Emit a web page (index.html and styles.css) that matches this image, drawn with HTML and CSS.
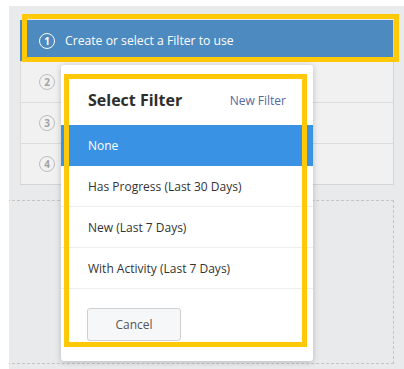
FILE: index.html
```html
<html>
    <head>
        <title>Select Filter</title>
        <meta charset="utf-8">
        <meta name="viewport" content="width=device-width, initial-scale=1">
        <link rel="stylesheet" href="styles.css">
    </head>
    <body>
        <div class="panel">
            <div class="steps">
                <div class="step active">
                    <span class="step-num">1</span>
                    <span class="step-text">Create or select a Filter to use</span>
                </div>
                <div class="step"><span class="step-num">2</span></div>
                <div class="step"><span class="step-num">3</span></div>
                <div class="step"><span class="step-num">4</span></div>
            </div>
            <div class="drop-area"></div>
        </div>

        <div class="highlight step-highlight"></div>

        <div class="popup">
            <div class="popup-header">
                <h4>Select Filter</h4>
                <a class="new-filter">New Filter</a>
            </div>
            <ul class="filter-list">
                <li class="selected">None</li>
                <li>Has Progress (Last 30 Days)</li>
                <li>New (Last 7 Days)</li>
                <li>With Activity (Last 7 Days)</li>
            </ul>
            <div class="popup-footer">
                <input type="button" class="cancel-button" value="Cancel">
            </div>
            <div class="highlight popup-highlight"></div>
        </div>
    </body>
</html>
```
FILE: styles.css
```css
body {
    margin: 0;
    background: #fff;
    font-family: 'Open Sans', 'Liberation Sans', sans-serif;
    color: #333;
    width: 404px;
    height: 369px;
    overflow: hidden;
    position: relative;
}

.panel {
    margin: 6px 0 0 9px;
    height: 363px;
    background: #e9eaec;
    padding: 14px 10px 0 11px;
    box-sizing: border-box;
    overflow: hidden;
}

.steps {
    background: #f1f1f1;
    border-left: 1px solid #dcdcdc;
    border-right: 1px solid #d4d4d4;
    border-bottom: 1px solid #d4d4d4;
}

.step {
    height: 41px;
    display: flex;
    align-items: center;
    padding-left: 18px;
    border-top: 1px solid #dcdcdc;
    box-sizing: border-box;
}

.step:first-child {
    border-top: none;
}

.step.active {
    background: #4d8abf;
    color: #fff;
    margin-left: -1px;
    padding-left: 19px;
}

.step-num {
    width: 14px;
    height: 14px;
    border: 1.2px solid #bdbdbd;
    border-radius: 50%;
    color: #a3a3a3;
    font-size: 10px;
    font-weight: bold;
    display: flex;
    align-items: center;
    justify-content: center;
}

.step.active .step-num {
    border-color: #fff;
    color: #fff;
}

.step-text {
    margin-left: 10px;
    font-size: 12.2px;
}

.drop-area {
    margin: 15px 0 0 -13px;
    height: 164px;
    border: 1.5px dashed #c4c4c4;
    box-sizing: border-box;
}

.highlight {
    position: absolute;
    border: 5px solid #ffc907;
    box-sizing: border-box;
    pointer-events: none;
}

.step-highlight {
    left: 22px;
    top: 14px;
    width: 377px;
    height: 48px;
}

.popup {
    position: absolute;
    left: 61px;
    top: 65px;
    width: 252px;
    height: 296px;
    background: #fff;
    border-radius: 3px;
    box-shadow: 0 1px 6px rgba(0, 0, 0, 0.22);
    display: flex;
    flex-direction: column;
}

.popup-header {
    height: 60px;
    display: flex;
    align-items: flex-end;
    justify-content: space-between;
    padding: 0 27px 14px 27px;
    box-sizing: border-box;
}

.popup-header h4 {
    margin: 0;
    font-size: 16px;
    font-weight: bold;
    color: #2d2d2d;
    line-height: 22px;
}

.new-filter {
    font-size: 12px;
    color: #55679f;
    line-height: 20px;
}

.filter-list {
    list-style: none;
    margin: 0;
    padding: 0;
}

.filter-list li {
    height: 41px;
    display: flex;
    align-items: center;
    padding-left: 27px;
    font-size: 12px;
    border-bottom: 1px solid #eeeeee;
    box-sizing: border-box;
}

.filter-list li.selected {
    background: #3a92e4;
    color: #fff;
    border-bottom: none;
}

.popup-footer {
    padding: 19px 26px 0 26px;
}

input[type=button].cancel-button {
    font-family: 'Open Sans', 'Liberation Sans', sans-serif;
    font-size: 12px;
    width: 94px;
    height: 33px;
    background: #f6f7f9;
    border: 1px solid #cfcfcf;
    border-radius: 3px;
    color: #555;
}

.popup-highlight {
    left: 3px;
    top: 9px;
    width: 243px;
    height: 273px;
}
```
